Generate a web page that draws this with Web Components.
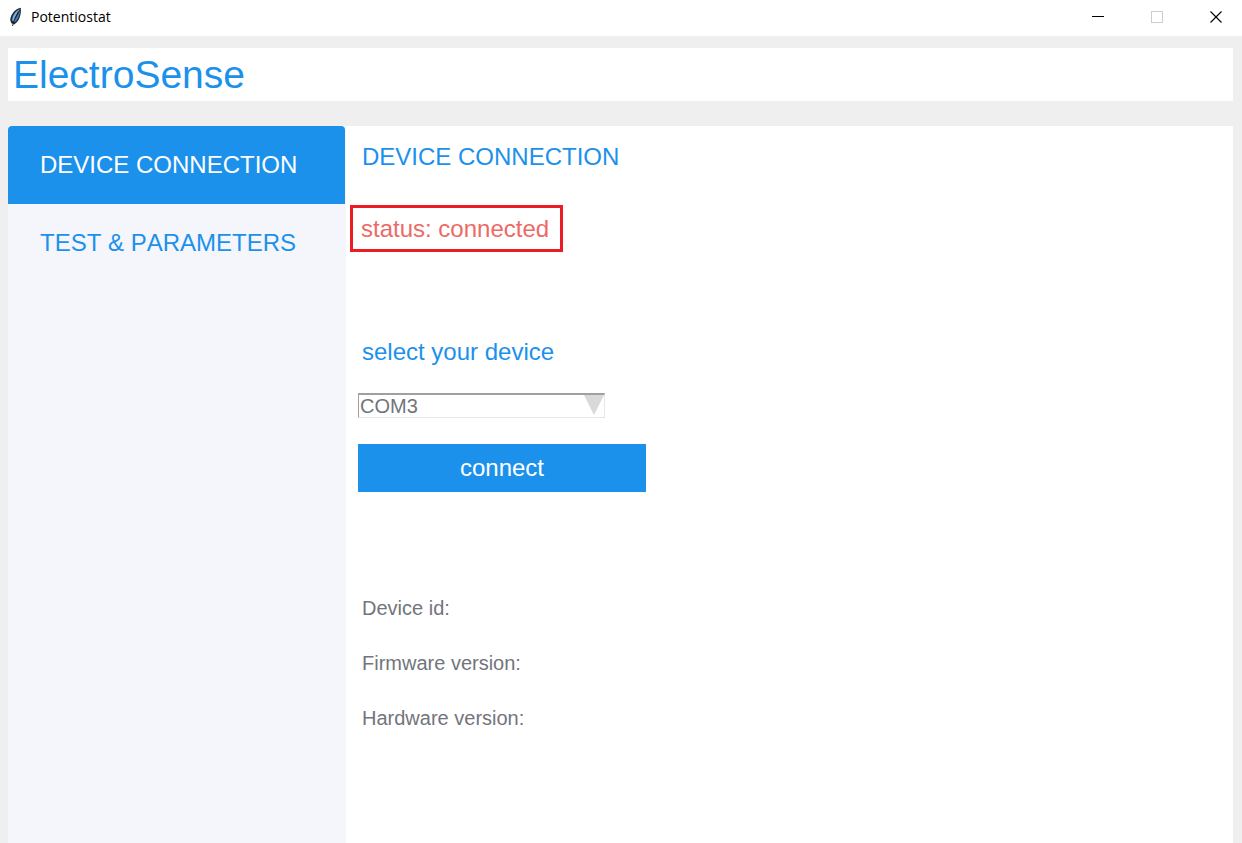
<!DOCTYPE html>
<html lang="en">
<head>
<meta charset="utf-8">
<title>Potentiostat</title>
<style>
html, body { margin: 0; height: 100%; }
body { font-family: "Liberation Sans", Arial, sans-serif; font-kerning: none; background: #efefef; }
</style>
</head>
<body>
<app-window>
  <title-bar slot="title">Potentiostat</title-bar>
  <brand-header slot="header">ElectroSense</brand-header>
  <side-nav slot="nav">
    <nav-tab active>DEVICE CONNECTION</nav-tab>
    <nav-tab>TEST &amp; PARAMETERS</nav-tab>
  </side-nav>
  <device-panel></device-panel>
</app-window>
<script>
function define(name, html) {
  const template = document.createElement('template');
  template.innerHTML = html;
  customElements.define(name, class extends HTMLElement {
    constructor() {
      super();
      this.attachShadow({ mode: 'open' }).append(template.content.cloneNode(true));
    }
  });
}

define('app-window', `
<style>
:host { display: flex; flex-direction: column; min-height: 100vh; }
.body { flex: 1; display: flex; flex-direction: column; gap: 25px; padding: 12px 9px 0 8px; }
.columns { flex: 1; display: flex; background: #fff; }
</style>
<slot name="title"></slot>
<div class="body">
  <slot name="header"></slot>
  <div class="columns"><slot name="nav"></slot><slot></slot></div>
</div>`);

define('title-bar', `
<style>
:host { display: flex; align-items: center; gap: 7px; height: 36px; background: #fff; color: #000;
  font: 14px/20px "Open Sans", "Noto Sans", sans-serif; }
.icon { margin: 0 0 3px 8px; }
.name { flex: 1; margin-bottom: 2px; }
button { width: 52px; height: 36px; padding: 0 0 2px; border: 0; background: none;
  display: grid; place-items: center; }
svg { display: block; }
</style>
<svg class="icon" width="16" height="20" viewBox="0 0 16 20" aria-hidden="true">
  <path d="M12.800 .8C8 1.500 2.500 7 2.200 13l1 3 2.800 1.500C11 15 13.500 8 12.800 .8z" fill="#22282e"/>
  <path d="M12 2C8 3.500 4.500 8 4 13.500l2.200 1.500C7 10 9 6 12 2z" fill="#73a9dc"/>
  <path d="M12 3.500C12 8 10 13 6.500 15.500L6 13.500c2-3 4-6 6-10z" fill="#3f7ab8"/>
  <path d="M10.500 5C8 9 6 12.500 4.500 19" fill="none" stroke="#161a1e" stroke-width=".9"/>
</svg>
<span class="name"><slot></slot></span>
<button aria-label="Minimize"><svg width="12" height="12" shape-rendering="crispEdges"><path d="M0 5.500h12" stroke="#000"/></svg></button>
<button disabled aria-label="Maximize"><svg width="12" height="12" shape-rendering="crispEdges"><rect x=".5" y=".5" width="11" height="11" fill="none" stroke="#ccc"/></svg></button>
<button aria-label="Close"><svg width="12" height="12"><path d="M.5.5l11 11M11.500.5l-11 11" stroke="#000" stroke-width="1.100"/></svg></button>`);

define('brand-header', `
<style>
:host { display: block; background: #fff; color: #1b91ec; padding: 4px 5px 3px; }
h1 { margin: 0; font-size: 39px; line-height: 46px; font-weight: 400; }
</style>
<h1><slot></slot></h1>`);

define('side-nav', `
<style>
:host { display: block; flex: none; background: #f4f6fb; padding-right: 1px; }
nav { display: flex; flex-direction: column; }
</style>
<nav><slot></slot></nav>`);

define('nav-tab', `
<style>
:host { display: block; }
button { width: 100%; min-width: 337px; border: 0; border-radius: 4px 4px 0 0; padding: 25px 32px;
  background: none; color: #1b91ec; font: inherit; font-size: 24px; line-height: 28px; text-align: left; }
:host([active]) button { background: #1b91ec; color: #fff; }
</style>
<button type="button"><slot></slot></button>`);

define('device-panel', `
<style>
:host { flex: 1; display: flex; flex-direction: column; align-items: flex-start;
  padding: 17px 4px; font-size: 24px; line-height: 28px; color: #1b91ec; }
h2, p { margin: 0; font-size: inherit; font-weight: 400; }
h2, label, dl { margin-left: 12px; }
.status { margin-top: 34px; padding: 7px 11px 6px 8px; border: 3px solid #ed1c24; color: #ec6a66; line-height: 28px; }
label { margin-top: 86px; }
select { appearance: none; box-sizing: border-box; width: 247px; height: 25px; margin: 27px 0 0 8px;
  padding: 0 20px 0 1px; border: 1px solid #e6e6e6; border-top: 2px solid #a0a0a0; border-left-color: #a0a0a0; border-radius: 0;
  color: #72757c; font: 20px/22px "Liberation Sans", Arial, sans-serif;
  background: url("data:image/svg+xml,%3Csvg xmlns='http://www.w3.org/2000/svg' width='20' height='20'%3E%3Cpath d='M0 0h20L10 20z' fill='%23d9d9d9'/%3E%3C/svg%3E") right top no-repeat #fff; }
.connect { width: 288px; margin: 26px 0 0 8px; padding: 10px 0; border: 0; background: #1b91ec; color: #fff;
  font: inherit; }
dl { margin-top: 104px; margin-bottom: 0; display: grid; gap: 31px; color: #72757c; font-size: 20px; line-height: 24px; }
dt, dd { margin: 0; }
dl div { display: flex; }
</style>
<h2>DEVICE CONNECTION</h2>
<p class="status" role="status">status: connected</p>
<label for="port">select your device</label>
<select id="port"><option>COM3</option></select>
<button class="connect" type="button">connect</button>
<dl>
  <div><dt>Device id:</dt><dd></dd></div>
  <div><dt>Firmware version:</dt><dd></dd></div>
  <div><dt>Hardware version:</dt><dd></dd></div>
</dl>`);
</script>
</body>
</html>
